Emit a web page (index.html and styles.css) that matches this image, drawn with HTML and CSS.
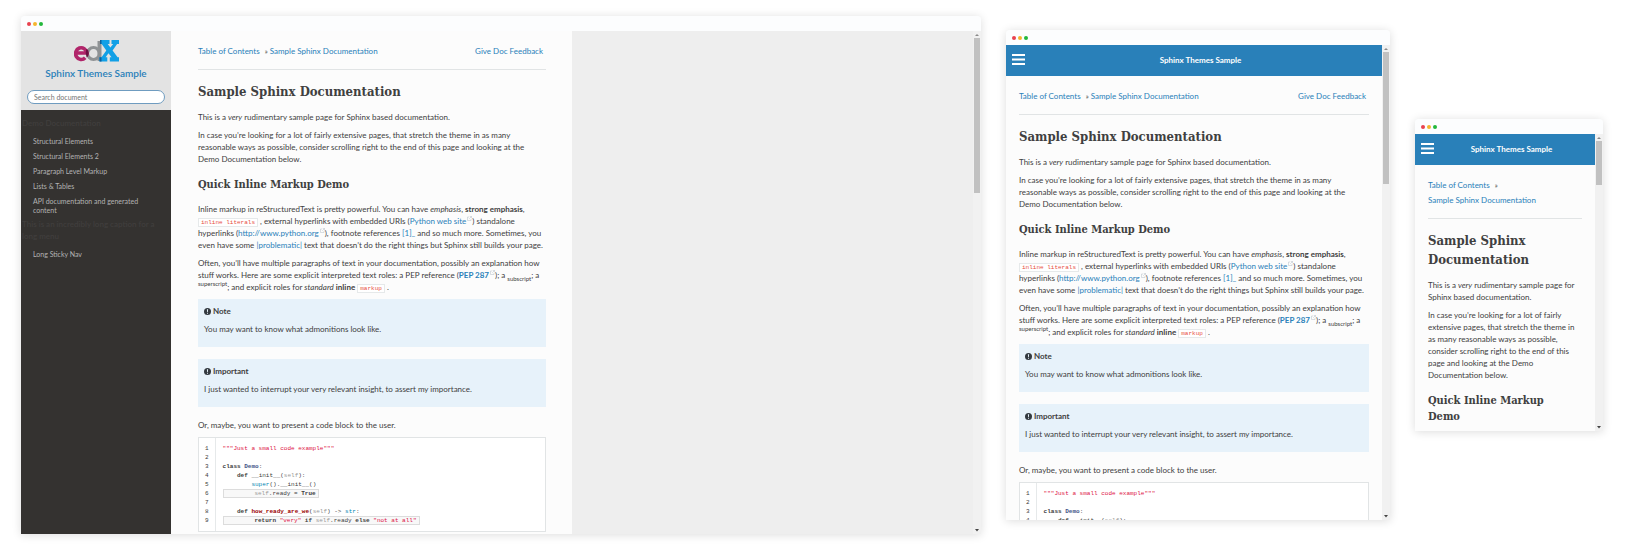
FILE: index.html
```html
<!DOCTYPE html>
<html lang="en">
<head>
<meta charset="utf-8">
<title>Sphinx Themes Sample</title>
<link rel="stylesheet" href="styles.css">
</head>
<body>
<svg class="defs" width="0" height="0" aria-hidden="true">
  <symbol id="ext" viewBox="0 0 10 10"><path d="M4 2H1v7h7V6M5.500 1H9v3.500M9 1 4.500 5.500" fill="none" stroke="#b5bfc6" stroke-width="1"/></symbol>
  <symbol id="warn" viewBox="0 0 14 14"><circle cx="7" cy="7" r="7" fill="#343a40"/><path d="M5.800 2.500h2.400l-.4 5.500H6.200zM6 9.300h2v2.200H6z" fill="#e7f2fa"/></symbol>
  <symbol id="bars" viewBox="0 0 13 11"><path d="M0 0h13v2H0zM0 4.500h13v2H0zM0 9h13v2H0z" fill="#fff"/></symbol>
  <symbol id="up" viewBox="0 0 4 4"><path d="M0 3 2 1l2 2z" fill="#8a8a8a"/></symbol>
  <symbol id="down" viewBox="0 0 4 4"><path d="M0 1h4L2 3.500z" fill="#444"/></symbol>
</svg>
<main class="showcase">

  <section class="window desktop">
    <div class="titlebar"><i class="dot red"></i><i class="dot yellow"></i><i class="dot green"></i></div>
    <div class="viewport">
      <aside class="sidebar">
        <div class="brand">
          <svg class="logo" viewBox="0 0 45 22" role="img" aria-label="edX">
            <circle cx="19.500" cy="13.500" r="6" fill="none" stroke="#8f9294" stroke-width="3.200"/>
            <path d="M23.500 1h4v20h-4z" fill="#8f9294"/>
            <path d="M2 13h10.800a5.600 5.900 0 1 0-1.600 4.800" fill="none" stroke="#b1256a" stroke-width="3.600"/>
            <path d="M12.300 9q-1.500 4 .4 8.500l1.600-1.500q1-3-.2-6z" fill="#6b1142"/>
            <path d="M26 0h9.500v4h-1.800l2.700 3.600L39.200 4H37.500V0H45v4h-1.900l-4.500 6.400 5 6.900H45V21.500h-9.200v-4.200h1.700l-3-4-2.900 4h1.700v4.200h-7.800v-4.200h2l4.800-6.700-4.600-6.600H26z" fill="#12a0e6"/>
            <path d="M25.500 17.300h2v4.200h-2zM26 0h1.500v4H26z" fill="#0d5f9c"/>
          </svg>
          <a class="brand-name" href="#">Sphinx Themes Sample</a>
          <input class="search" type="text" placeholder="Search document" aria-label="Search document">
        </div>
        <nav class="menu">
          <p class="caption">Demo Documentation</p>
          <ul>
            <li><a href="#">Structural Elements</a></li>
            <li><a href="#">Structural Elements 2</a></li>
            <li><a href="#">Paragraph Level Markup</a></li>
            <li><a href="#">Lists &amp; Tables</a></li>
            <li><a href="#">API documentation and generated content</a></li>
          </ul>
          <p class="caption">This is an incredibly long caption for a long menu</p>
          <ul>
            <li><a href="#">Long Sticky Nav</a></li>
          </ul>
        </nav>
      </aside>
      <article class="doc">
        <div class="crumbs">
          <div class="trail"><a href="#">Table of Contents</a> <span class="sep">»</span> <a href="#">Sample Sphinx Documentation</a></div>
          <a class="feedback" href="#">Give Doc Feedback</a>
        </div>
        <hr>
        <h1>Sample Sphinx Documentation</h1>
        <p>This is a <em>very</em> rudimentary sample page for Sphinx based documentation.</p>
        <p>In case you’re looking for a lot of fairly extensive pages, that stretch the theme in as many reasonable ways as possible, consider scrolling right to the end of this page and looking at the Demo Documentation below.</p>
        <h2>Quick Inline Markup Demo</h2>
        <p>Inline markup in reStructuredText is pretty powerful. You can have <em>emphasis</em>, <strong>strong emphasis</strong>, <code class="lit">inline literals</code> , external hyperlinks with embedded URIs (<a href="#">Python web site<svg class="ext"><use href="#ext"/></svg></a>) standalone hyperlinks (<a href="#">http://www.python.org<svg class="ext"><use href="#ext"/></svg></a>), footnote references <a href="#">[1]_</a> and so much more. Sometimes, you even have some <a href="#">|problematic|</a> text that doesn’t do the right things but Sphinx still builds your page.</p>
        <p>Often, you’ll have multiple paragraphs of text in your documentation, possibly an explanation how stuff works. Here are some explicit interpreted text roles: a PEP reference (<a href="#"><strong>PEP 287</strong><svg class="ext"><use href="#ext"/></svg></a>); a <sub>subscript</sub>; a <sup>superscript</sup>; and explicit roles for <em>standard</em> <strong>inline</strong> <code class="lit">markup</code> .</p>
        <div class="note">
          <p class="note-title"><svg class="warn"><use href="#warn"/></svg> Note</p>
          <p>You may want to know what admonitions look like.</p>
        </div>
        <div class="note">
          <p class="note-title"><svg class="warn"><use href="#warn"/></svg> Important</p>
          <p>I just wanted to interrupt your very relevant insight, to assert my importance.</p>
        </div>
        <p>Or, maybe, you want to present a code block to the user.</p>
        <div class="code">
<pre class="nums">1
2
3
4
5
6
7
8
9</pre>
<pre class="src"><span class="s">"""Just a small code example"""</span>

<b>class</b> <b class="nc">Demo</b>:
    <b>def</b> __init__(<span class="bp">self</span>):
        <span class="nb">super</span>().__init__()
<span class="hll">        <span class="bp">self</span>.ready = <b>True</b></span>

    <b>def</b> <b class="nf">how_ready_are_we</b>(<span class="bp">self</span>) -&gt; <span class="nb">str</span>:
<span class="hll">        <b>return</b> <span class="s">"very"</span> <b>if</b> <span class="bp">self</span>.ready <b>else</b> <span class="s">"not at all"</span></span></pre>
        </div>
      </article>
      <div class="blank"></div>
      <div class="scrollbar"><svg class="arrow"><use href="#up"/></svg><i class="thumb"></i><svg class="arrow end"><use href="#down"/></svg></div>
    </div>
  </section>

  <section class="window tablet">
    <div class="titlebar"><i class="dot red"></i><i class="dot yellow"></i><i class="dot green"></i></div>
    <div class="viewport">
      <div class="page">
        <header class="topbar"><button class="burger" type="button" aria-label="Menu"><svg><use href="#bars"/></svg></button><a href="#">Sphinx Themes Sample</a></header>
        <article class="doc">
          <div class="crumbs">
            <div class="trail"><a href="#">Table of Contents</a> <span class="sep">»</span> <a href="#">Sample Sphinx Documentation</a></div>
            <a class="feedback" href="#">Give Doc Feedback</a>
          </div>
          <hr>
          <h1>Sample Sphinx Documentation</h1>
          <p>This is a <em>very</em> rudimentary sample page for Sphinx based documentation.</p>
          <p>In case you’re looking for a lot of fairly extensive pages, that stretch the theme in as many reasonable ways as possible, consider scrolling right to the end of this page and looking at the Demo Documentation below.</p>
          <h2>Quick Inline Markup Demo</h2>
          <p>Inline markup in reStructuredText is pretty powerful. You can have <em>emphasis</em>, <strong>strong emphasis</strong>, <code class="lit">inline literals</code> , external hyperlinks with embedded URIs (<a href="#">Python web site<svg class="ext"><use href="#ext"/></svg></a>) standalone hyperlinks (<a href="#">http://www.python.org<svg class="ext"><use href="#ext"/></svg></a>), footnote references <a href="#">[1]_</a> and so much more. Sometimes, you even have some <a href="#">|problematic|</a> text that doesn’t do the right things but Sphinx still builds your page.</p>
          <p>Often, you’ll have multiple paragraphs of text in your documentation, possibly an explanation how stuff works. Here are some explicit interpreted text roles: a PEP reference (<a href="#"><strong>PEP 287</strong><svg class="ext"><use href="#ext"/></svg></a>); a <sub>subscript</sub>; a <sup>superscript</sup>; and explicit roles for <em>standard</em> <strong>inline</strong> <code class="lit">markup</code> .</p>
          <div class="note">
            <p class="note-title"><svg class="warn"><use href="#warn"/></svg> Note</p>
            <p>You may want to know what admonitions look like.</p>
          </div>
          <div class="note">
            <p class="note-title"><svg class="warn"><use href="#warn"/></svg> Important</p>
            <p>I just wanted to interrupt your very relevant insight, to assert my importance.</p>
          </div>
          <p>Or, maybe, you want to present a code block to the user.</p>
          <div class="code">
<pre class="nums">1
2
3
4</pre>
<pre class="src"><span class="s">"""Just a small code example"""</span>

<b>class</b> <b class="nc">Demo</b>:
    <b>def</b> __init__(<span class="bp">self</span>):</pre>
          </div>
        </article>
      </div>
      <div class="scrollbar"><svg class="arrow"><use href="#up"/></svg><i class="thumb"></i><svg class="arrow end"><use href="#down"/></svg></div>
    </div>
  </section>

  <section class="window phone">
    <div class="titlebar"><i class="dot red"></i><i class="dot yellow"></i><i class="dot green"></i></div>
    <div class="viewport">
      <div class="page">
        <header class="topbar"><button class="burger" type="button" aria-label="Menu"><svg><use href="#bars"/></svg></button><a href="#">Sphinx Themes Sample</a></header>
        <article class="doc">
          <div class="crumbs">
            <div class="trail"><a href="#">Table of Contents</a> <span class="sep">»</span> <a href="#">Sample Sphinx Documentation</a></div>
          </div>
          <hr>
          <h1>Sample Sphinx Documentation</h1>
          <p>This is a <em>very</em> rudimentary sample page for Sphinx based documentation.</p>
          <p>In case you’re looking for a lot of fairly extensive pages, that stretch the theme in as many reasonable ways as possible, consider scrolling right to the end of this page and looking at the Demo Documentation below.</p>
          <h2>Quick Inline Markup Demo</h2>
        </article>
      </div>
      <div class="scrollbar"><svg class="arrow"><use href="#up"/></svg><i class="thumb"></i><svg class="arrow end"><use href="#down"/></svg></div>
    </div>
  </section>

</main>
</body>
</html>
```
FILE: styles.css
```css
* { box-sizing: border-box; }
body {
  margin: 0;
  background: #fff;
  color: #404040;
  font-family: Lato, "Open Sans", sans-serif;
  font-size: 8px;
  line-height: 12px;
}
a { color: #2980b9; text-decoration: none; }
p { margin: 0 0 6px; }
.defs { display: none; }

.showcase {
  display: flex;
  align-items: center;
  gap: 25px;
  min-height: 100vh;
  padding: 0 22px 0 21px;
}

/* Browser frames */
.window {
  min-width: 0;
  border-radius: 4px 4px 0 0;
  background: #fcfcfc;
  box-shadow: 0 1px 10px rgba(0, 0, 0, .14);
}
.desktop { flex: 960 1 0; }
.tablet { flex: 384 1 0; }
.phone { flex: 188 1 0; }
.titlebar {
  display: flex;
  align-items: center;
  gap: 2px;
  height: 15px;
  padding: 0 6px;
  border-radius: 4px 4px 0 0;
  background: #fcfdfe;
}
.dot { width: 4px; height: 4px; border-radius: 50%; }
.red { background: #e8424f; }
.yellow { background: #f5b52e; }
.green { background: #23b83c; }
.viewport { display: flex; overflow: hidden; }
.desktop .viewport { max-height: 503px; }
.tablet .viewport { max-height: 475px; }
.phone .viewport { max-height: 297px; }
.page { flex: 1; min-width: 0; }

.scrollbar {
  flex: none;
  display: flex;
  flex-direction: column;
  align-items: center;
  width: 8px;
  padding: 1px 0;
  background: #f1f1f1;
}
.arrow { flex: none; width: 4px; height: 6px; }
.end { margin-top: auto; }
.thumb { width: 6px; background: #c1c1c1; }
.desktop .thumb { height: 31%; }
.tablet .thumb { height: 28%; }
.phone .thumb { height: 15%; }

/* Sidebar */
.sidebar { flex: none; width: 150px; background: #343230; }
.brand {
  display: flex;
  flex-direction: column;
  align-items: center;
  padding: 9px 6px 6px;
  background: #e3e3e3;
}
.logo { width: 45px; height: 22px; }
.brand-name { margin: 3px 0 9px; font-size: 10px; line-height: 16px; font-weight: 600; }
.search {
  width: 100%;
  height: 14px;
  padding: 0 6px;
  border: 1px solid #6f9cc0;
  border-radius: 7px;
  background: #fff;
  font: 7px Lato, sans-serif;
  outline: 0;
}
.search::placeholder { color: #757575; opacity: 1; }
.menu { padding-top: 7px; }
.caption { margin: 0 0 5px; padding-left: 1px; font-weight: 600; color: #403e3d; }
.menu ul { margin: 0; padding: 0; list-style: none; }
.menu a { display: block; padding: 3px 22px 3px 12px; color: #b3b3b3; font-size: 7px; line-height: 9px; }

/* Document */
.doc { padding: 13px 13px 24px; background: #fcfcfc; }
.desktop .doc { flex: none; width: 401px; padding: 13px 26px 24px 27px; }
.tablet .doc > p { padding-right: 4px; }
.phone h2 { padding-right: 8px; }
.blank { flex: 1; background: #eee; }
.crumbs { display: flex; justify-content: space-between; line-height: 15px; }
.crumbs a { display: inline-block; white-space: nowrap; }
.sep { margin-left: 3px; font-size: 7px; }
.feedback { padding-right: 3px; }
hr { margin: 10px 0 12px; border: 0; border-top: 1px solid #e1e4e5; }
h1, h2 { font-family: "Roboto Slab", "DejaVu Serif Condensed", "DejaVu Serif", serif; font-weight: 700; }
h1 { margin: 0 0 10px; font-size: 13px; line-height: 19px; }
h2 { margin: 12px 0 10px; font-size: 11px; line-height: 16px; }
sub, sup { font-size: 6px; line-height: 0; }
.lit {
  padding: 0 2px;
  border: 1px solid #e6e9ea;
  background: #fff;
  color: #e74c3c;
  font: 6px "Liberation Mono", monospace;
}
.ext { width: 5px; height: 5px; margin-left: 1px; vertical-align: 3px; }
.note { margin-bottom: 12px; padding: 6px 6px 12px; background: #e7f2fa; }
.note p:last-child { margin: 0; }
.note-title { font-weight: 700; }
.warn { width: 7px; height: 7px; vertical-align: -1px; }

.code { display: flex; border: 1px solid #e1e4e5; background: #fff; }
.code pre { margin: 0; padding: 6px 7px; font: 6px/9px "Liberation Mono", monospace; }
.code .nums { padding: 6px; border-right: 1px solid #e6e9ea; }
.hll {
  display: inline-block;
  padding: 0 2px;
  border: 1px solid #dcdcdc;
  background: #f8f8f8;
  line-height: 7px;
  vertical-align: top;
}
.s { color: #dd1144; }
.nc { color: #445588; }
.nb { color: #0086b3; }
.bp { color: #999; }
.nf { color: #990000; }

/* Mobile header */
.topbar {
  display: flex;
  align-items: flex-start;
  padding: 6px;
  background: #2980b9;
  line-height: 19px;
}
.topbar a { flex: 1; color: #fff; font-weight: 700; text-align: center; }
.burger { display: flex; padding: 3px 0 0; border: 0; background: none; }
.burger svg { width: 13px; height: 11px; }
```
